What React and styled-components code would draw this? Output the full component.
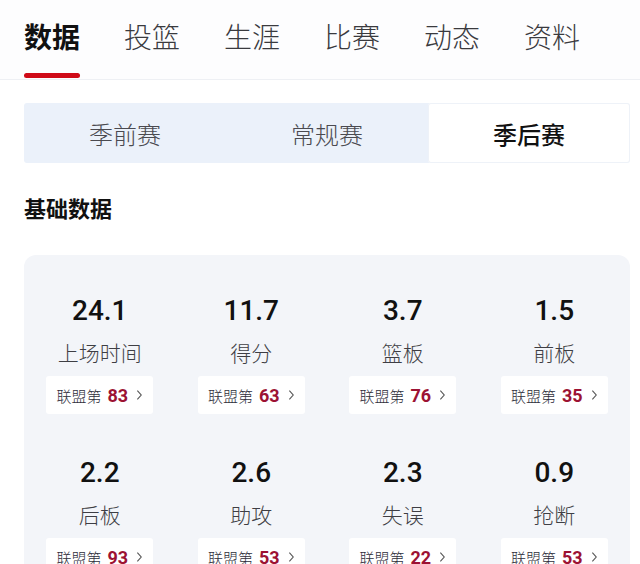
import styled, { createGlobalStyle } from "styled-components";

const tabs = ["数据", "投篮", "生涯", "比赛", "动态", "资料"];
const seasons = ["季前赛", "常规赛", "季后赛"];
const stats = [
  { value: "24.1", label: "上场时间", rank: 83 },
  { value: "11.7", label: "得分", rank: 63 },
  { value: "3.7", label: "篮板", rank: 76 },
  { value: "1.5", label: "前板", rank: 35 },
  { value: "2.2", label: "后板", rank: 93 },
  { value: "2.6", label: "助攻", rank: 53 },
  { value: "2.3", label: "失误", rank: 22 },
  { value: "0.9", label: "抢断", rank: 53 },
];

export default function App() {
  return (
    <Page>
      <GlobalStyle />
      <TabBar>
        {tabs.map((t, i) => (
          <Tab key={t} $active={i === 0}>
            <span>{t}</span>
            <Underline $active={i === 0} />
          </Tab>
        ))}
      </TabBar>
      <Content>
        <Segments>
          {seasons.map((s, i) => (
            <Segment key={s} $active={i === 2}>{s}</Segment>
          ))}
        </Segments>
        <Heading>基础数据</Heading>
        <Card>
          {stats.map((s) => (
            <Stat key={s.label}>
              <Value>{s.value}</Value>
              <Label>{s.label}</Label>
              <Rank>
                联盟第<b>{s.rank}</b>
                <Chevron viewBox="0 0 8 14">
                  <path d="M1.5 2 L6 7 L1.5 12" />
                </Chevron>
              </Rank>
            </Stat>
          ))}
        </Card>
      </Content>
    </Page>
  );
}

const GlobalStyle = createGlobalStyle`
  body {
    margin: 0;
    background: #ffffff;
    font-family: "Noto Sans CJK SC", "Noto Sans", sans-serif;
  }
`;

const Page = styled.div`
  width: 640px;
  height: 564px;
  overflow: hidden;
  background: #ffffff;
`;

const TabBar = styled.div`
  display: flex;
  gap: 44px;
  padding-left: 24px;
  height: 79px;
  border-bottom: 1px solid #eef0f4;
  background: #fdfdfe;
`;

const Tab = styled.div`
  display: flex;
  flex-direction: column;
  align-items: center;
  width: 56px;
  padding-top: 16px;
  span {
    font-size: 28px;
    line-height: 40px;
    font-weight: ${(p) => (p.$active ? 700 : 300)};
    color: ${(p) => (p.$active ? "#111111" : "#3a3a3e")};
    white-space: nowrap;
  }
`;

const Underline = styled.div`
  margin-top: 17px;
  width: 56px;
  height: 5px;
  border-radius: 3px;
  background: ${(p) => (p.$active ? "#cf0a17" : "transparent")};
`;

const Content = styled.div`
  padding: 23px 10px 0 24px;
`;

const Segments = styled.div`
  display: grid;
  grid-template-columns: repeat(3, 1fr);
  height: 60px;
  background: #ebf1fa;
  border-radius: 3px;
`;

const Segment = styled.div`
  display: flex;
  align-items: center;
  justify-content: center;
  font-size: 24px;
  font-weight: ${(p) => (p.$active ? 500 : 300)};
  color: ${(p) => (p.$active ? "#111111" : "#4a4a50")};
  background: ${(p) => (p.$active ? "#ffffff" : "transparent")};
  box-shadow: ${(p) => (p.$active ? "inset 0 0 0 1px #eef2f8" : "none")};
  border-radius: 3px;
`;

const Heading = styled.h2`
  margin: 29px 0 0;
  font-size: 22px;
  line-height: 30px;
  font-weight: 700;
  color: #111111;
`;

const Card = styled.div`
  margin-top: 33px;
  display: grid;
  grid-template-columns: repeat(4, 1fr);
  row-gap: 42px;
  padding-top: 39px;
  padding-bottom: 30px;
  background: #f3f5f9;
  border-radius: 12px;
`;

const Stat = styled.div`
  display: flex;
  flex-direction: column;
  align-items: center;
`;

const Value = styled.div`
  font-family: Roboto, "Noto Sans", sans-serif;
  font-size: 28px;
  line-height: 34px;
  font-weight: 500;
  color: #111111;
`;

const Label = styled.div`
  margin-top: 9px;
  font-size: 21px;
  line-height: 30px;
  font-weight: 300;
  color: #3e3e44;
`;

const Rank = styled.div`
  margin-top: 9px;
  display: flex;
  align-items: center;
  height: 38px;
  padding: 0 10px;
  background: #ffffff;
  border-radius: 3px;
  font-size: 15px;
  font-weight: 300;
  color: #2e2e3a;
  b {
    font-family: Roboto, "Noto Sans", sans-serif;
    font-size: 18px;
    font-weight: 700;
    color: #9c1233;
    margin: 0 8px 0 6px;
  }
`;

const Chevron = styled.svg`
  width: 7px;
  height: 12px;
  fill: none;
  stroke: #555;
  stroke-width: 1.3;
`;
